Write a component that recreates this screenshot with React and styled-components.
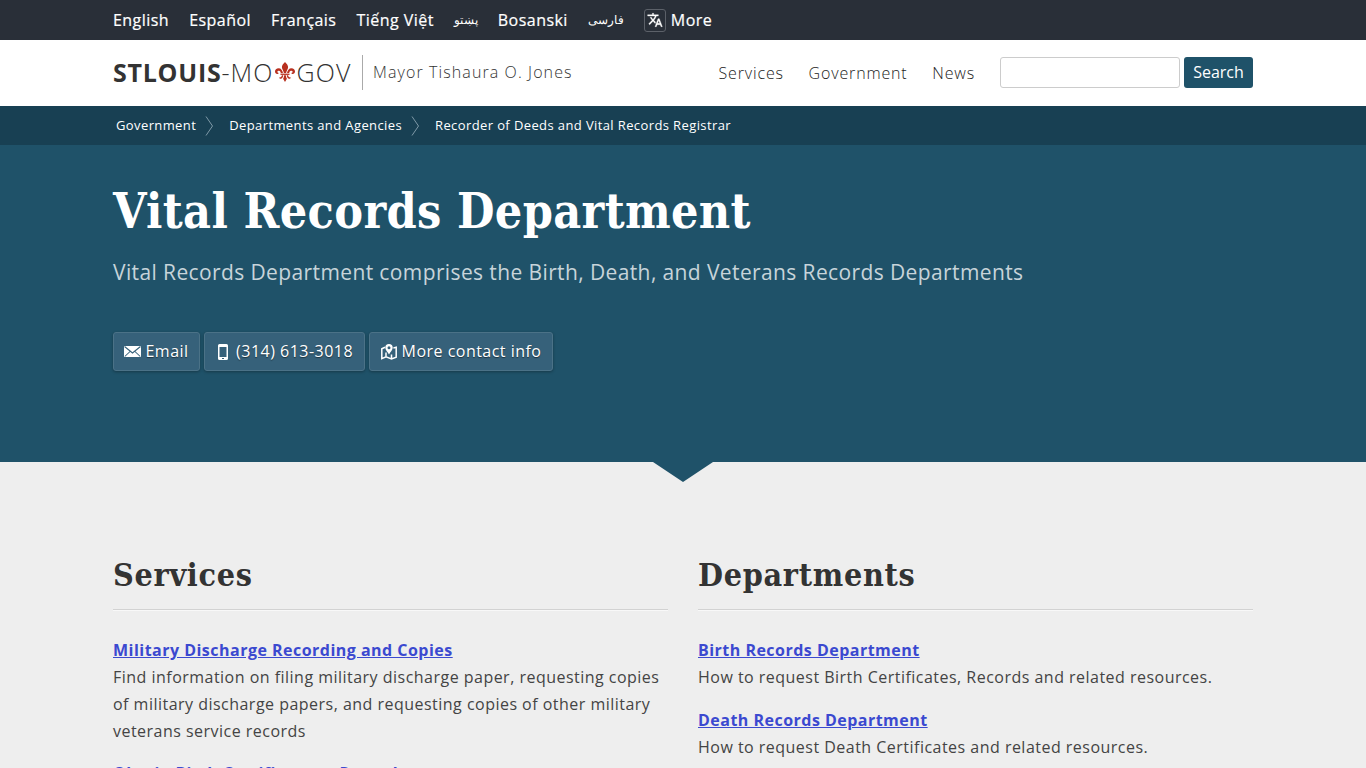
import React from "react";
import styled, { createGlobalStyle } from "styled-components";

const languages = [
  { name: "English" },
  { name: "Español" },
  { name: "Français" },
  { name: "Tiếng Việt" },
  { name: "پښتو", arabic: true },
  { name: "Bosanski" },
  { name: "فارسی", arabic: true },
];

const services = [
  {
    title: "Military Discharge Recording and Copies",
    text: "Find information on filing military discharge paper, requesting copies of military discharge papers, and requesting copies of other military veterans service records",
  },
  { title: "Obtain Birth Certificate or Record", text: "" },
];

const departments = [
  {
    title: "Birth Records Department",
    text: "How to request Birth Certificates, Records and related resources.",
  },
  {
    title: "Death Records Department",
    text: "How to request Death Certificates and related resources.",
  },
];

const TranslateIcon = () => (
  <svg width="16" height="16" viewBox="0 0 24 24" fill="#fff" stroke="#fff" strokeWidth="0.5">
    <path d="M12.87 15.07l-2.54-2.51.03-.03A17.52 17.52 0 0 0 14.07 6H17V4h-7V2H8v2H1v2h11.17C11.5 7.92 10.44 9.75 9 11.35 8.07 10.32 7.3 9.19 6.69 8h-2c.73 1.63 1.73 3.17 2.98 4.56l-5.09 5.02L4 19l5-5 3.11 3.11.76-2.04zM18.5 10h-2L12 22h2l1.12-3h4.75L21 22h2l-4.5-12zm-2.62 7l1.62-4.33L19.12 17h-3.24z" />
  </svg>
);

const FleurIcon = () => (
  <svg width="20" height="20" viewBox="0 0 20 20" fill="#b8301f">
    <path d="M10 0C8.6 1.6 6.9 3 6.9 5.1c0 2 1.5 3.4 2 5.9h2.2c.5-2.5 2-3.9 2-5.9C13.1 3 11.4 1.6 10 0z" />
    <path d="M8 11C7.5 8.300 6 6.200 3.600 6.200 1.400 6.200 0 7.700 0 9.500c0 1.500 1 2.500 2.200 2.500.7 0 1.300-.4 1.500-1-1-.1-1.500-.7-1.300-1.400.2-.7.900-1 1.600-.8 1.100.3 1.700 1.200 1.800 2.200z" />
    <path d="M12 11c.5-2.700 2-4.800 4.400-4.800 2.200 0 3.600 1.500 3.600 3.300 0 1.500-1 2.500-2.200 2.500-.7 0-1.300-.4-1.500-1 1-.1 1.500-.7 1.300-1.400-.2-.7-.9-1-1.600-.8-1.100.3-1.700 1.200-1.800 2.200z" />
    <path d="M5.500 11.600h9v1.300h-9z" />
    <path d="M9.100 13.200h1.800c0 1.600.5 2.500 1 3.600L10 20l-1.900-3.200c.5-1.100 1-2 1-3.600z" />
    <path d="M8.300 13.200c-.2 1.900-1.200 3.300-2.600 3.600-1 .1-1.600-.7-1.300-1.500.8.500 2.200-.4 2.500-2.100zM11.700 13.200c.2 1.900 1.200 3.300 2.600 3.600 1 .1 1.600-.7 1.300-1.500-.8.500-2.200-.4-2.500-2.100z" />
  </svg>
);

const MailIcon = () => (
  <svg width="17" height="11" viewBox="0 0 16 11" preserveAspectRatio="none">
    <path d="M0 0h16v11H0z" fill="#fff" />
    <path d="M.5.500L8 7 15.500.500M.7 10.500l5-5M15.300 10.500l-5-5" fill="none" stroke="#36617a" strokeWidth="1" />
  </svg>
);

const PhoneIcon = () => (
  <svg width="10" height="16" viewBox="0 0 10 16">
    <path
      fillRule="evenodd"
      fill="#fff"
      d="M1.500 0h7A1.500 1.500 0 0 1 10 1.500v13A1.500 1.500 0 0 1 8.500 16h-7A1.500 1.500 0 0 1 0 14.500v-13A1.500 1.500 0 0 1 1.500 0zM1.500 3v10h7V3zM4 14v1h2v-1z"
    />
  </svg>
);

const MapIcon = () => (
  <svg width="16" height="16" viewBox="0 0 16 16" fill="none" stroke="#fff" strokeWidth="1.500">
    <path d="M4 3.200L.8 4.700v10L5 12.900l5.500 2 4.700-1.700V3.300L12.400 4M5 8.500v4.400M10.500 10.500v4.400" />
    <path
      fillRule="evenodd"
      fill="#fff"
      stroke="none"
      d="M8 0a3.700 3.700 0 0 1 3.700 3.700C11.700 6 9.500 7.500 8 10.500 6.500 7.500 4.300 6 4.300 3.700A3.700 3.700 0 0 1 8 0zm0 2.200a1.500 1.500 0 1 0 0 3 1.500 1.500 0 0 0 0-3z"
    />
  </svg>
);

const Separator = () => (
  <svg width="9" height="20" viewBox="0 0 9 20" fill="none" stroke="#7f99a7" strokeWidth="1">
    <path d="M1 .5l6.500 9.500L1 19.500" />
  </svg>
);

const Listing = ({ title, items, spacing }) => (
  <Column>
    <h2>{title}</h2>
    {items.map((item) => (
      <Entry key={item.title} $spacing={spacing}>
        <a href="#">{item.title}</a>
        <p>{item.text}</p>
      </Entry>
    ))}
  </Column>
);

const App = () => {
  return (
    <>
      <GlobalStyle />
      <LanguageBar>
        <Container>
          {languages.map(({ name, arabic }) => (
            <Language key={name} href="#" $arabic={arabic}>
              {name}
            </Language>
          ))}
          <Language href="#">
            <IconBox>
              <TranslateIcon />
            </IconBox>
            More
          </Language>
        </Container>
      </LanguageBar>
      <Header>
        <Container>
          <Logo href="#">
            <b>STLOUIS</b>
            <span>-MO</span>
            <FleurIcon />
            <span>GOV</span>
          </Logo>
          <Mayor>Mayor Tishaura O. Jones</Mayor>
          <Nav>
            <a href="#">Services</a>
            <a href="#">Government</a>
            <a href="#">News</a>
          </Nav>
          <SearchForm>
            <input type="text" />
            <button type="button">Search</button>
          </SearchForm>
        </Container>
      </Header>
      <Breadcrumbs>
        <Container>
          <a href="#">Government</a>
          <Separator />
          <a href="#">Departments and Agencies</a>
          <Separator />
          <a href="#">Recorder of Deeds and Vital Records Registrar</a>
        </Container>
      </Breadcrumbs>
      <Hero>
        <HeroContent>
          <h1>Vital Records Department</h1>
          <p>Vital Records Department comprises the Birth, Death, and Veterans Records Departments</p>
          <Buttons>
            <ContactButton href="#">
              <MailIcon />
              Email
            </ContactButton>
            <ContactButton href="#" $wide>
              <PhoneIcon />
              (314) 613-3018
            </ContactButton>
            <ContactButton href="#">
              <MapIcon />
              More contact info
            </ContactButton>
          </Buttons>
        </HeroContent>
      </Hero>
      <Main>
        <Listing title="Services" items={services} spacing={15} />
        <Listing title="Departments" items={departments} spacing={16} />
      </Main>
    </>
  );
};

export default App;

const GlobalStyle = createGlobalStyle`
  * {
    box-sizing: border-box;
  }
  body {
    margin: 0;
    height: 768px;
    overflow: hidden;
    background-color: #eee;
    color: #333;
    font-family: "Open Sans", "Noto Sans", sans-serif;
    font-size: 16px;
  }
  h1, h2, p {
    margin: 0;
  }
  a {
    text-decoration: none;
    white-space: nowrap;
  }
`;

const Container = styled.div`
  display: flex;
  align-items: center;
  width: 1140px;
  height: 100%;
  margin: 0 auto;
`;

const LanguageBar = styled.div`
  height: 40px;
  background-color: #292f38;

  ${Container} {
    gap: 20px;
  }
`;

const Language = styled.a`
  display: flex;
  align-items: center;
  gap: 5px;
  color: #fff;
  font-size: ${(props) => (props.$arabic ? "12.3px" : "16px")};
  font-weight: ${(props) => (props.$arabic ? 400 : 500)};
  line-height: 22px;
  letter-spacing: ${(props) => (props.$arabic ? "0" : "0.46px")};
  -webkit-text-stroke: ${(props) => (props.$arabic ? "0" : "0.2px #fff")};
`;

const IconBox = styled.span`
  display: flex;
  align-items: center;
  justify-content: center;
  width: 22px;
  height: 23px;
  border: 1px solid #5c6169;
  border-radius: 3px;
`;

const Header = styled.header`
  height: 66px;
  padding-bottom: 2px;
  background-color: #fff;
`;

const Logo = styled.a`
  display: flex;
  align-items: center;
  height: 35px;
  width: 250px;
  border-right: 1px solid #aaa;
  color: #333;
  font-size: 25px;
  font-weight: 300;
  letter-spacing: 1.1px;

  b {
    font-weight: 700;
    letter-spacing: 0.75px;
  }
  svg {
    flex: none;
    margin: 0 2px 0 1px;
  }
`;

const Mayor = styled.span`
  margin-left: 10px;
  font-weight: 300;
  letter-spacing: 1.1px;
`;

const Nav = styled.nav`
  display: flex;
  gap: 24.7px;
  margin: 2px 0 0 auto;

  a {
    color: #222;
    font-weight: 300;
    letter-spacing: 0.85px;
  }
`;

const SearchForm = styled.form`
  display: flex;
  gap: 4px;
  margin-left: 25px;

  input {
    width: 180px;
    height: 31px;
    border: 1px solid #ccc;
    border-radius: 3px;
  }
  button {
    width: 69px;
    height: 31px;
    padding: 0;
    border: none;
    border-radius: 3px;
    background-color: #1f5269;
    color: #fff;
    font: 500 16px "Open Sans", sans-serif;
  }
`;

const Breadcrumbs = styled.div`
  height: 39px;
  background-color: #184053;

  ${Container} {
    padding-left: 3px;
  }
  a {
    padding-bottom: 2px;
    color: #fff;
    font-size: 13px;
    font-weight: 500;
    letter-spacing: 0.39px;
  }
  svg {
    margin: 0 15px 0 9px;
  }
`;

const Hero = styled.section`
  position: relative;
  height: 317px;
  background-color: #1f5269;

  &::after {
    content: "";
    position: absolute;
    top: 100%;
    left: 50%;
    margin-left: -30px;
    border: 30px solid transparent;
    border-top: 20px solid #1f5269;
    border-bottom: none;
  }
`;

const HeroContent = styled.div`
  width: 1140px;
  margin: 0 auto;
  padding-top: 35px;
  color: #fff;

  h1 {
    font-family: "DejaVu Serif Condensed", "DejaVu Serif", serif;
    font-stretch: condensed;
    font-size: 48px;
    font-weight: 700;
    line-height: 62px;
    letter-spacing: 0.35px;
    white-space: nowrap;
  }
  p {
    margin-top: 14px;
    color: #c7d4da;
    font-size: 21px;
    line-height: 32px;
    letter-spacing: 0.385px;
    white-space: nowrap;
  }
`;

const Buttons = styled.div`
  display: flex;
  gap: 4px;
  margin-top: 44px;
`;

const ContactButton = styled.a`
  display: flex;
  align-items: center;
  gap: ${(props) => (props.$wide ? "8px" : "4.5px")};
  height: 39px;
  padding: 0 11px 2px ${(props) => (props.$wide ? "13px" : "10px")};
  border: 1px solid #4b7287;
  border-radius: 3px;
  background-color: #36617a;
  box-shadow: 0 1px 3px rgba(0, 0, 0, 0.3);
  color: #fff;
  text-shadow: 0 1px 1px rgba(0, 0, 0, 0.5);
  letter-spacing: 0.48px;

  svg {
    position: relative;
    top: 1px;
  }
  &:first-child {
    padding-right: 10.5px;
  }
  &:last-child {
    padding-left: 11px;
  }
`;

const Main = styled.main`
  display: grid;
  grid-template-columns: 1fr 1fr;
  gap: 30px;
  width: 1140px;
  margin: 0 auto;
  padding-top: 88px;
`;

const Column = styled.section`
  h2 {
    height: 60px;
    margin-bottom: 27px;
    border-bottom: 1px solid #d2d2d2;
    box-shadow: 0 1px 0 #f8f8f8;
    font-family: "DejaVu Serif Condensed", "DejaVu Serif", serif;
    font-stretch: condensed;
    font-size: 32px;
    font-weight: 700;
    line-height: 50px;
    letter-spacing: 0.7px;
  }
`;

const Entry = styled.div`
  margin-bottom: ${(props) => props.$spacing}px;
  color: #444;
  line-height: 27px;
  letter-spacing: 0.48px;

  a {
    color: #3b49d0;
    font-weight: 700;
    text-decoration: underline;
  }
`;
